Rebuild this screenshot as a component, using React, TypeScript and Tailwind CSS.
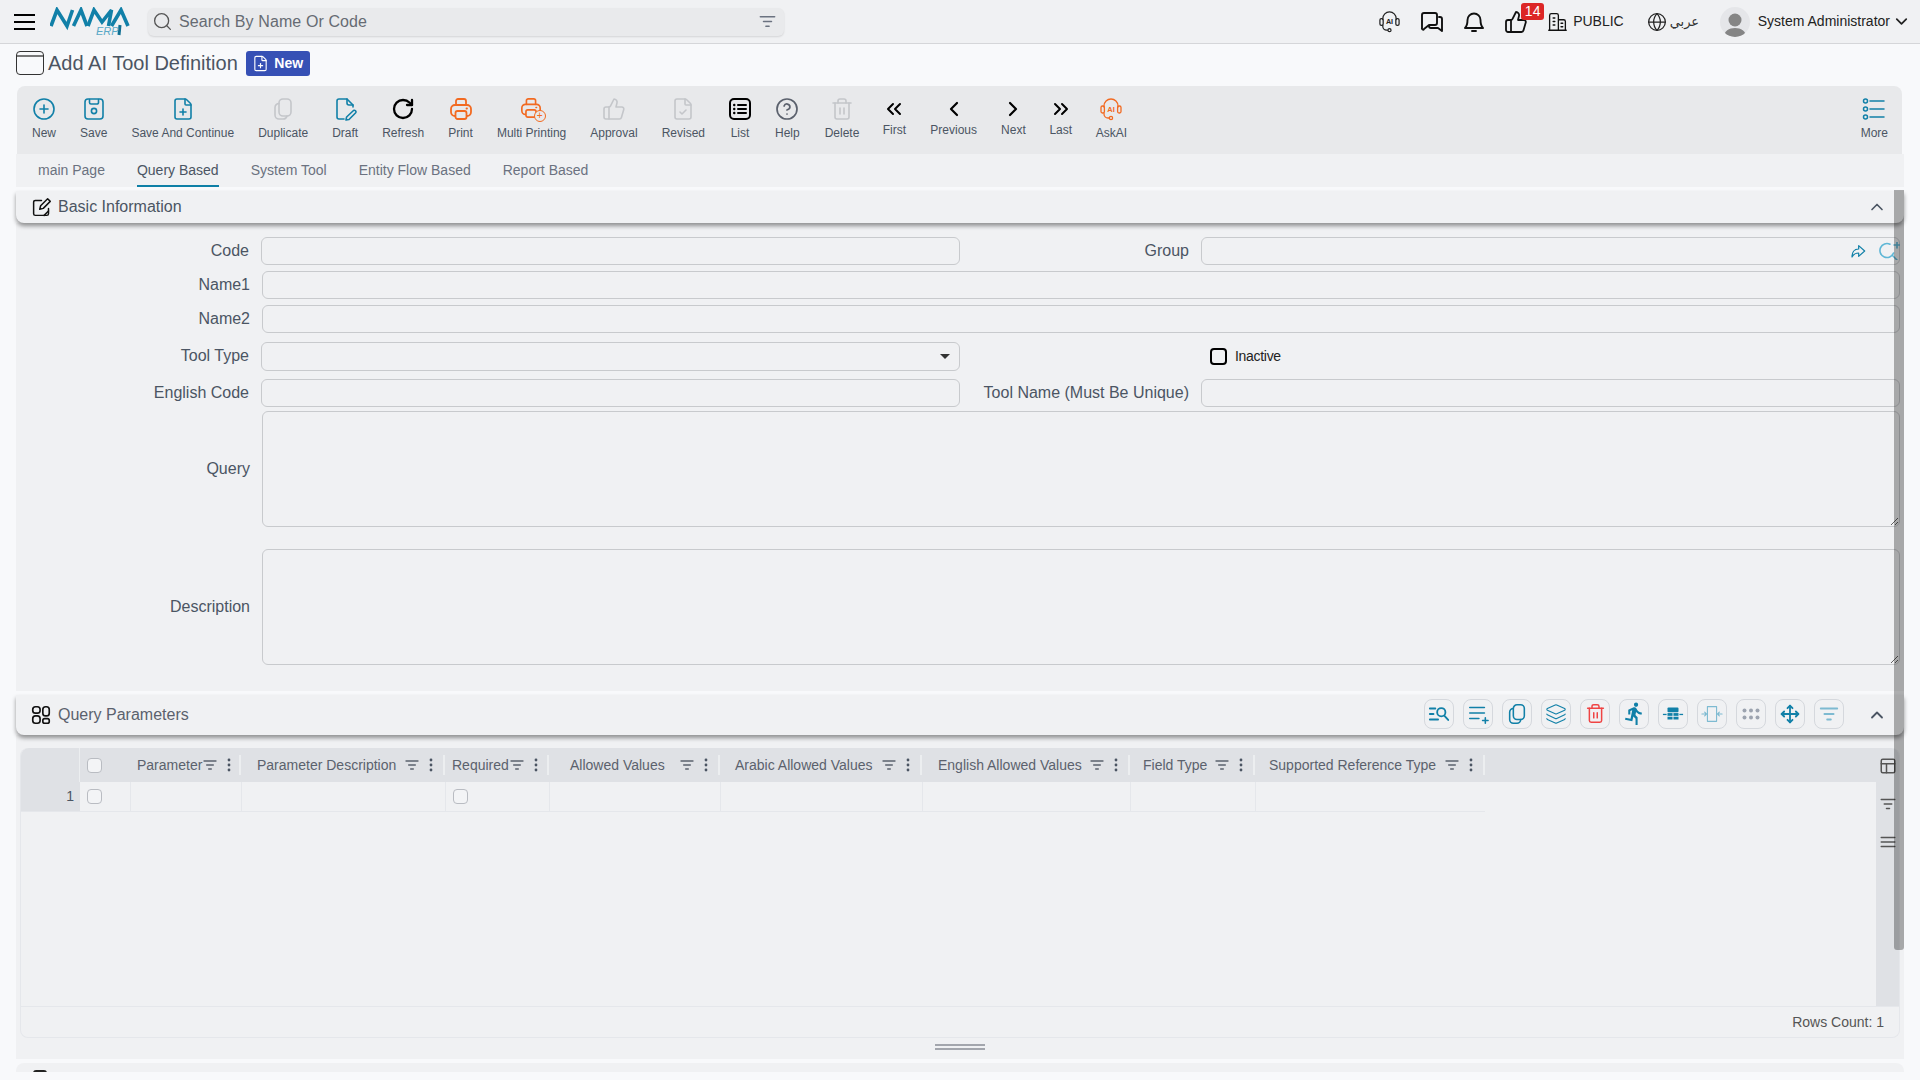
import type { ReactNode } from 'react';
import {
  ChevronDown,
  ChevronLeft,
  ChevronRight,
  ChevronUp,
  ChevronsLeft,
  ChevronsRight,
  CircleHelp,
  CirclePlus,
  FileCheck,
  FilePlus,
  Globe,
  Layers,
  Move,
  RotateCw,
  Search,
  ThumbsUp,
  Trash2,
} from 'lucide-react';
import { MdDirectionsRun } from 'react-icons/md';

const TEAL = '#1180a8';
const ORANGE = '#f26a21';
const MUTED = '#c4c6ca';

function Svg({ size = 24, color = 'currentColor', sw = 1.6, children }: { size?: number; color?: string; sw?: number; children: ReactNode }) {
  return (
    <svg width={size} height={size} viewBox="0 0 24 24" fill="none" stroke={color} strokeWidth={sw} strokeLinecap="round" strokeLinejoin="round">
      {children}
    </svg>
  );
}

function PrinterIcon({ size = 24 }: { size?: number }) {
  return (
    <Svg size={size} color={ORANGE} sw={1.8}>
      <path d="M7 8V4a2 2 0 0 1 2-2h6a2 2 0 0 1 2 2v4" />
      <rect x="2" y="8" width="20" height="11" rx="4" />
      <rect x="6.5" y="14" width="11" height="8" rx="2" fill="#e8e9eb" />
      <path d="M17.5 11.5h.5" />
    </Svg>
  );
}

function FilterLines({ size = 20, color = '#5b616d', sw = 2 }: { size?: number; color?: string; sw?: number }) {
  return (
    <Svg size={size} color={color} sw={sw}>
      <path d="M3 6h18M7 12h10M10 18h4" />
    </Svg>
  );
}

function Dots() {
  return (
    <svg width="4" height="14" viewBox="0 0 4 14" fill="#4b5563">
      <circle cx="2" cy="2" r="1.4" />
      <circle cx="2" cy="7" r="1.4" />
      <circle cx="2" cy="12" r="1.4" />
    </svg>
  );
}

function AiHeadset({ color, size = 24 }: { color: string; size?: number }) {
  return (
    <svg width={size} height={size} viewBox="0 0 24 24" fill="none" stroke={color} strokeWidth="1.3" strokeLinecap="round">
      <path d="M5 10V9a7 7 0 0 1 14 0v1" />
      <rect x="2" y="9" width="3.4" height="7" rx="1.5" />
      <rect x="18.6" y="9" width="3.4" height="7" rx="1.5" />
      <path d="M5 16v1a4 4 0 0 0 4 4h1" />
      <circle cx="12" cy="21" r="1.6" />
      <text x="12" y="15" textAnchor="middle" fontSize="7.5" fontWeight="700" fill={color} stroke="none" fontFamily="Liberation Sans">
        AI
      </text>
    </svg>
  );
}

function Logo() {
  return (
    <div className="relative w-[80px] h-[30px] ml-[15px]">
      <svg width="80" height="30" viewBox="0 0 80 30" fill="none" stroke="#1180a8" strokeWidth="3.6" strokeLinejoin="miter">
        <path d="M1 19 L7 3 L17 19 L22.5 3" />
        <path d="M23.5 19 L31 3 L37 19" />
        <path d="M38 19 L44 3 L52 15 L61.5 3 L58.5 19" />
        <path d="M61.5 19 L71 3 L78 19" />
        <path d="M70 18 L69 28" stroke="#0f6f92" strokeWidth="3" />
      </svg>
      <span className="absolute left-[46px] top-[18px] text-[11px] leading-[12px] italic text-[#5aa9c7]">ERP</span>
    </div>
  );
}

type ToolItem = { label: string; icon: ReactNode; nav?: boolean; nudge?: string };

const toolItems: ToolItem[] = [
  { label: 'New', icon: <CirclePlus size={24} color={TEAL} strokeWidth={1.6} /> },
  {
    label: 'Save',
    icon: (
      <Svg color={TEAL}>
        <path d="M6 2h12a3 3 0 0 1 3 3v14a3 3 0 0 1-3 3H6a3 3 0 0 1-3-3V5a3 3 0 0 1 3-3z" />
        <path d="M7.5 2.5v3a1.5 1.5 0 0 0 1.5 1.5h6a1.5 1.5 0 0 0 1.5-1.5v-3" />
        <circle cx="12" cy="14" r="2.6" />
      </Svg>
    ),
  },
  { label: 'Save And Continue', icon: <FilePlus size={24} color={TEAL} strokeWidth={1.6} /> },
  {
    label: 'Duplicate',
    icon: (
      <Svg color={MUTED}>
        <rect x="8" y="2" width="12" height="17" rx="4" />
        <path d="M8 6.5A4 4 0 0 0 4 10.5V18a4 4 0 0 0 4 4h4a4 4 0 0 0 4-3" />
      </Svg>
    ),
  },
  {
    label: 'Draft',
    icon: (
      <Svg color={TEAL}>
        <path d="M11 22H6a2 2 0 0 1-2-2V4a2 2 0 0 1 2-2h8l6 6v2" />
        <path d="M14 2v4a2 2 0 0 0 2 2h4" />
        <path d="M20.5 13.5a1.6 1.6 0 0 1 2.2 2.2L16 22.5l-3 .5.6-3z" />
      </Svg>
    ),
  },
  { label: 'Refresh', icon: <RotateCw size={24} color="#000" strokeWidth={2.3} /> },
  { label: 'Print', icon: <PrinterIcon /> },
  {
    label: 'Multi Printing',
    icon: (
      <div className="relative w-6 h-6">
        <PrinterIcon size={22} />
        <div className="absolute right-[-2px] bottom-[-1px] w-[12px] h-[12px] rounded-full bg-[#e8e9eb] border-[1.5px] border-[#f26a21] flex items-center justify-center text-[10px] leading-none text-[#f26a21]">+</div>
      </div>
    ),
  },
  { label: 'Approval', icon: <ThumbsUp size={24} color={MUTED} strokeWidth={1.6} /> },
  { label: 'Revised', icon: <FileCheck size={24} color={MUTED} strokeWidth={1.6} /> },
  {
    label: 'List',
    nudge: 'ml-[-1px]',
    icon: (
      <Svg color="#000" sw={2}>
        <rect x="2" y="2" width="20" height="20" rx="4" />
        <path d="M10 8h8M10 12h8M10 16h8" />
        <path d="M6.2 8h.1M6.2 12h.1M6.2 16h.1" strokeWidth="2.4" />
      </Svg>
    ),
  },
  { label: 'Help', nudge: 'ml-[-1px]', icon: <CircleHelp size={24} color="#5b616d" strokeWidth={1.7} /> },
  { label: 'Delete', nudge: 'ml-[1px]', icon: <Trash2 size={24} color={MUTED} strokeWidth={1.6} /> },
  { label: 'First', nav: true, nudge: 'ml-[-1px]', icon: <ChevronsLeft size={24} color="#000" strokeWidth={2} /> },
  { label: 'Previous', nav: true, icon: <ChevronLeft size={24} color="#000" strokeWidth={2.2} /> },
  { label: 'Next', nav: true, icon: <ChevronRight size={24} color="#000" strokeWidth={2.2} /> },
  { label: 'Last', nav: true, nudge: 'ml-[-1px]', icon: <ChevronsRight size={24} color="#000" strokeWidth={2} /> },
  { label: 'AskAI', nudge: 'ml-[-1px]', icon: <AiHeadset color={ORANGE} /> },
];

function ToolButton({ item }: { item: ToolItem }) {
  return (
    <div className={`flex flex-col items-center px-3 pt-[11px] ${item.nudge ?? ''}`}>
      <div className="h-6 flex items-center justify-center">{item.icon}</div>
      <span className={`${item.nav ? 'mt-[2px]' : 'mt-[5px]'} text-[12px] leading-[14px] text-[#4b5563] whitespace-nowrap`}>{item.label}</span>
    </div>
  );
}

const tabs = ['main Page', 'Query Based', 'System Tool', 'Entity Flow Based', 'Report Based'];

const inputClass = 'h-7 rounded-md border border-[#c8cacd] bg-[#f0f1f3] outline-none';

function Label({ children, width = 'w-[234px]' }: { children: ReactNode; width?: string }) {
  return <label className={`${width} shrink-0 text-right text-[16px] leading-5 text-[#4b5563] whitespace-nowrap`}>{children}</label>;
}

const gridButtons: ReactNode[] = [
  <Svg size={22} color={TEAL} sw={2}>
    <path d="M2 6h6M2 12h4M2 18h9" />
    <circle cx="14.5" cy="10" r="4.5" />
    <path d="M18 14l4 4.5" />
  </Svg>,
  <Svg size={22} color={TEAL} sw={1.7}>
    <path d="M3 5h16M3 11h16M3 17h10M17 19h6M20 16v6" />
  </Svg>,
  <Svg size={22} color={TEAL} sw={1.7}>
    <rect x="8" y="2" width="12" height="16" rx="4" />
    <path d="M8 6a4 4 0 0 0-4 4v8a4 4 0 0 0 4 4h4a4 4 0 0 0 4-4" />
  </Svg>,
  <Layers size={22} color={TEAL} strokeWidth={1.2} />,
  <Trash2 size={21} color="#ef4444" strokeWidth={1.7} />,
  <MdDirectionsRun size={25} color={TEAL} />,
  <svg width="22" height="22" viewBox="0 0 24 24" fill={TEAL}>
    <rect x="6" y="5" width="12" height="5" rx="1" />
    <rect x="6" y="11" width="5.5" height="3" />
    <rect x="12.5" y="11" width="5.5" height="3" />
    <rect x="6" y="15" width="5.5" height="3" />
    <rect x="12.5" y="15" width="5.5" height="3" />
    <rect x="1" y="11.8" width="4" height="1.4" />
    <rect x="19" y="11.8" width="4" height="1.4" />
  </svg>,
  <Svg size={22} color="#7dbad1" sw={1.2}>
    <rect x="7" y="4" width="10" height="16" />
    <path d="M1 12h5M18 12h5M4 10l2 2-2 2M20 10l-2 2 2 2" />
  </Svg>,
  <svg width="20" height="20" viewBox="0 0 20 20" fill="#9ca3af">
    <circle cx="3.5" cy="6.5" r="2" />
    <circle cx="10" cy="6.5" r="2" />
    <circle cx="16.5" cy="6.5" r="2" />
    <circle cx="3.5" cy="13.5" r="2" />
    <circle cx="10" cy="13.5" r="2" />
    <circle cx="16.5" cy="13.5" r="2" />
  </svg>,
  <Move size={20} color={TEAL} strokeWidth={2.2} />,
  <FilterLines size={22} color="#7dbad1" />,
];

const columns = [
  { label: 'Parameter', width: 111, pad: 7 },
  { label: 'Parameter Description', width: 204, pad: 16 },
  { label: 'Required', width: 104, pad: 7, check: true },
  { label: 'Allowed Values', width: 171, pad: 21 },
  { label: 'Arabic Allowed Values', width: 202, pad: 15 },
  { label: 'English Allowed Values', width: 208, pad: 16 },
  { label: 'Field Type', width: 125, pad: 13 },
  { label: 'Supported Reference Type', width: 230, pad: 14 },
];

const gridCheckbox = 'block w-[15px] h-[15px] appearance-none rounded-[4px] border border-[#b9bcc2] bg-[#f3f4f6]';

export default function App() {
  return (
    <div className="relative h-screen overflow-hidden bg-[#f8f9fb] font-['Liberation_Sans',Arial,sans-serif]">
      {/* Top bar */}
      <header className="flex items-center h-[44px] bg-[#f0f1f3] border-b border-[#d5d6d9]">
        <div className="ml-[14px] w-[21px] flex flex-col gap-[5px]">
          <span className="h-[2px] bg-black" />
          <span className="h-[2px] bg-black" />
          <span className="h-[2px] bg-black" />
        </div>
        <Logo />
        <div className="ml-[18px] w-[636px] h-[28px] flex items-center rounded-md bg-[#e9eaec] shadow-[0_1px_2px_rgba(0,0,0,0.12)]">
          <Search size={21} color="#555" strokeWidth={1.5} className="ml-[4px]" />
          <span className="ml-[6px] text-[16px] tracking-[0.1px] text-[#666b73]">Search By Name Or Code</span>
          <span className="ml-auto mr-[7px]">
            <FilterLines size={19} color="#6b7280" />
          </span>
        </div>
        <div className="ml-auto flex items-center text-[#111]">
          <AiHeadset color="#222" size={23} />
          <span className="ml-[19px]">
            <Svg size={24} color="#111" sw={1.9}>
              <path d="M4 3h11a2 2 0 0 1 2 2v8a2 2 0 0 1-2 2H9l-5 4a1 1 0 0 1-2-1V5a2 2 0 0 1 2-2z" />
              <path d="M19 7h1a2 2 0 0 1 2 2v12l-4-3h-7a2 2 0 0 1-2-2" />
            </Svg>
          </span>
          <span className="ml-[18px]">
            <Svg size={24} color="#111" sw={1.9}>
              <path d="M3 18c2-2 2.5-4 2.5-8a6.5 6.5 0 0 1 13 0c0 4 .5 6 2.5 8z" />
              <path d="M10 21h4" />
            </Svg>
          </span>
          <span className="relative ml-[18px]">
            <ThumbsUp size={24} color="#111" strokeWidth={1.8} />
            <span className="absolute left-[17px] top-[-7px] w-[23px] h-[17px] rounded-[3px] bg-[#dc2626] text-white text-[14px] leading-[17px] text-center">14</span>
          </span>
          <span className="ml-[19px]">
            <Svg size={21} color="#111" sw={1.5}>
              <path d="M3 22V5a2 2 0 0 1 2-2h6a2 2 0 0 1 2 2v17M13 10h6a2 2 0 0 1 2 2v10M2 22h20M7 8h2M7 12h2M7 16h2M16 14h2M16 18h2" />
            </Svg>
          </span>
          <span className="ml-[5px] text-[14px] text-[#222]">PUBLIC</span>
          <Globe size={20} color="#222" strokeWidth={1.5} className="ml-[23px]" />
          <span className="ml-[3px] w-[28px] text-[13px] text-[#333] font-['DejaVu_Sans',sans-serif]">عربي</span>
          <span className="ml-[22px] w-[30px] h-[30px] rounded-full bg-[#e5e6e9] flex items-end justify-center overflow-hidden">
            <svg width="24" height="26" viewBox="0 0 24 26" fill="#858585">
              <circle cx="12" cy="9" r="6.5" />
              <path d="M1 26c0-6 5-9 11-9s11 3 11 9z" />
            </svg>
          </span>
          <span className="ml-[8px] text-[14px] text-[#222] whitespace-nowrap">System Administrator</span>
          <ChevronDown size={19} color="#222" strokeWidth={2.2} className="ml-[2px] mr-[9px]" />
        </div>
      </header>

      {/* Title */}
      <div className="flex items-center h-[42px] pl-4 pb-[4px]">
        <div className="w-[28px] h-[24px] rounded-[4px] border border-[#333] pt-[3px]">
          <div className="h-[2px] bg-[#777]" />
        </div>
        <h1 className="ml-[4px] text-[20px] font-normal text-[#4b5563]">Add AI Tool Definition</h1>
        <span className="ml-[8px] h-[25px] w-[64px] rounded-[3px] bg-[#3650b5] flex items-center justify-center gap-[5px] text-white text-[14px] font-bold">
          <FilePlus size={17} color="#fff" strokeWidth={1.6} />
          New
        </span>
      </div>

      <main className="ml-4 w-[1888px]">
        {/* Toolbar */}
        <div className="ml-px mr-[2px] h-[68px] flex pl-[3px] pr-[2px] rounded-t-lg bg-[#e8e9eb]">
          {toolItems.map((item) => (
            <ToolButton key={item.label} item={item} />
          ))}
          <div className="ml-auto">
            <ToolButton
              item={{
                label: 'More',
                icon: (
                  <Svg color={TEAL} sw={1.5}>
                    <circle cx="3.5" cy="4" r="2" />
                    <circle cx="3.5" cy="12" r="2" />
                    <circle cx="3.5" cy="20" r="2" />
                    <path d="M8 4h14M8 12h14M8 20h14" />
                  </Svg>
                ),
              }}
            />
          </div>
        </div>

        {/* Tabs */}
        <div className="h-[33px] flex gap-8 pl-[22px] bg-[#f0f1f3]">
          {tabs.map((tab) => (
            <div
              key={tab}
              className={`h-[33px] pt-[8px] text-[14px] leading-4 border-b-2 ${tab === 'Query Based' ? 'border-[#0e7fa6] text-[#4b5563]' : 'border-transparent text-[#6b7280]'}`}
            >
              {tab}
            </div>
          ))}
        </div>

        {/* Basic Information */}
        <div className="relative z-10 mt-1 h-[32px] flex items-center justify-between pl-[15px] pr-[17px] rounded-b-lg bg-[#f0f1f3] shadow-[0_3px_4px_rgba(0,0,0,0.4)]">
          <div className="flex items-center">
            <Svg size={21} color="#111" sw={1.7}>
              <path d="M20 13v6a2 2 0 0 1-2 2H5a2 2 0 0 1-2-2V6a2 2 0 0 1 2-2h7" />
              <path d="M10 14l1-4 8-8 3 3-8 8z" />
              <path d="M15 21l5-5" />
            </Svg>
            <span className="ml-[6px] text-[16px] text-[#4b5563]">Basic Information</span>
          </div>
          <ChevronUp size={20} color="#4b5563" strokeWidth={2} />
        </div>

        <div className="h-[468px] pt-[14px] bg-[#f0f1f3]">
          <div className="flex items-center">
            <Label width="w-[233px]">Code</Label>
            <input className={`${inputClass} ml-3 w-[699px]`} />
            <Label width="w-[229px]">Group</Label>
            <div className="relative ml-3 w-[699px]">
              <input className={`${inputClass} block w-full`} />
              <svg className="absolute right-[34px] top-[6px]" width="16" height="16" viewBox="0 0 24 24" fill="none" stroke={TEAL} strokeWidth="1.8" strokeLinejoin="round">
                <path d="M13 4l9 8-9 8v-5C8 15 5 17 3 21c0-7 3-12 10-12z" />
              </svg>
              <svg className="absolute right-0 top-[5px]" width="22" height="18" viewBox="0 0 22 18" fill="none" stroke="#5fb7d6" strokeWidth="1.6" strokeLinecap="round">
                <path d="M12 2.2A7 7 0 1 0 15.5 11M14 13l5 5M19 0v6M16 3h6" />
              </svg>
            </div>
          </div>
          <div className="mt-[6px] flex items-center">
            <Label>Name1</Label>
            <input className={`${inputClass} ml-3 w-[1638px]`} />
          </div>
          <div className="mt-[6px] flex items-center">
            <Label>Name2</Label>
            <input className={`${inputClass} ml-3 w-[1638px]`} />
          </div>
          <div className="mt-[9px] flex items-center h-[29px]">
            <Label width="w-[233px] pb-[2px]">Tool Type</Label>
            <div className="relative ml-3 w-[699px]">
              <select className={`${inputClass} block w-full !h-[29px] appearance-none`} />
              <span className="absolute right-[10px] top-[12px] border-x-[5px] border-t-[5px] border-x-transparent border-t-[#333]" />
            </div>
            <input type="checkbox" className="ml-[250px] w-[17px] h-[17px] appearance-none rounded-[4px] border-2 border-black" />
            <span className="ml-2 text-[14px] tracking-[-0.3px] text-[#222]">Inactive</span>
          </div>
          <div className="mt-[8px] flex items-center">
            <Label width="w-[233px]">English Code</Label>
            <input className={`${inputClass} ml-3 w-[699px]`} />
            <Label width="w-[229px]">Tool Name (Must Be Unique)</Label>
            <input className={`${inputClass} ml-3 w-[699px]`} />
          </div>
          <div className="mt-[4px] flex items-center">
            <Label>Query</Label>
            <textarea className="ml-3 w-[1638px] h-[116px] rounded-md border border-[#c8cacd] bg-[#f0f1f3] outline-none resize-y block" />
          </div>
          <div className="mt-[22px] flex items-center">
            <Label>Description</Label>
            <textarea className="ml-3 w-[1638px] h-[116px] rounded-md border border-[#c8cacd] bg-[#f0f1f3] outline-none resize-y block" />
          </div>
        </div>

        {/* Query Parameters */}
        <div className="relative z-10 mt-1 h-[40px] flex items-center pl-[14px] pr-[17px] rounded-b-lg bg-[#f0f1f3] shadow-[0_3px_4px_rgba(0,0,0,0.4)]">
          <Svg size={22} color="#111" sw={1.8}>
            <rect x="3" y="3" width="8" height="7" rx="3" />
            <rect x="14" y="3" width="7" height="10" rx="3" />
            <rect x="3" y="13" width="8" height="8" rx="3" />
            <rect x="14" y="16" width="7" height="5" rx="2" />
          </Svg>
          <span className="ml-[6px] text-[16px] text-[#5b616d]">Query Parameters</span>
          <div className="ml-auto mt-[-3px] flex gap-[9px]">
            {gridButtons.map((icon, i) => (
              <div key={i} className="w-[30px] h-[30px] rounded-lg border border-[#d5d8dd] flex items-center justify-center">
                {icon}
              </div>
            ))}
          </div>
          <ChevronUp size={20} color="#4b5563" strokeWidth={2.2} className="ml-[23px]" />
        </div>

        <div className="h-[324px] pt-[13px] bg-[#f0f1f3]">
          <div className="ml-1 mr-1 h-[290px] flex flex-col rounded-lg border-b border-x border-[#e5e7eb]">
            <div className="flex-1 flex">
              <div className="flex-1">
                <div className="flex h-[34px] rounded-tl-lg bg-[#dfe1e5]">
                  <div className="w-[59px] shrink-0 border-r border-[#eceef0]" />
                  <div className="w-[50px] shrink-0 flex items-center pl-[7px]">
                    <input type="checkbox" className={gridCheckbox} />
                  </div>
                  {columns.map((col) => (
                    <div key={col.label} className="relative shrink-0 flex items-center pr-[12px]" style={{ width: col.width, paddingLeft: col.pad }}>
                      <span className="text-[14px] text-[#5b616d] whitespace-nowrap">{col.label}</span>
                      <span className="ml-auto">
                        <FilterLines size={16} />
                      </span>
                      <span className="ml-[9px]">
                        <Dots />
                      </span>
                      <span className="absolute right-0 top-[7px] h-[20px] w-[2px] bg-[#eceef0]" />
                    </div>
                  ))}
                </div>
                <div className="flex h-[30px] border-b border-[#e5e7eb] w-[1464px]">
                  <div className="w-[59px] shrink-0 bg-[#dfe1e5] flex items-center justify-end pr-[6px] text-[14px] text-[#4b5563]">1</div>
                  <div className="w-[50px] shrink-0 flex items-center pl-[7px]">
                    <input type="checkbox" className={gridCheckbox} />
                  </div>
                  {columns.map((col) => (
                    <div key={col.label} className="shrink-0 flex items-center pl-[7px] border-l border-[#e5e7eb]" style={{ width: col.width }}>
                      {col.check && <input type="checkbox" className={gridCheckbox} />}
                    </div>
                  ))}
                </div>
              </div>
              <div className="w-[23px] shrink-0 rounded-tr-lg bg-[#dfe1e5] flex flex-col items-center pt-[9px]">
                <Svg size={18} color="#555" sw={2}>
                  <rect x="3" y="3" width="18" height="18" rx="2" />
                  <path d="M3 9h18M10 9v12" />
                </Svg>
                <span className="mt-[20px]">
                  <FilterLines size={18} color="#555" />
                </span>
                <span className="mt-[20px]">
                  <Svg size={18} color="#555" sw={2}>
                    <path d="M3 6h18M3 12h18M3 18h18" />
                  </Svg>
                </span>
              </div>
            </div>
            <div className="h-[31px] shrink-0 border-t border-[#e5e7eb] flex items-center justify-end pr-[15px] text-[14px] text-[#555]">Rows Count: 1</div>
          </div>
          <div className="mt-[6px] w-[50px] mx-auto">
            <div className="h-[2px] bg-[#a3a6ad]" />
            <div className="mt-[2px] h-[2px] bg-[#a3a6ad]" />
          </div>
        </div>

        {/* Next panel, cut off by the page */}
        <div className="mt-1 h-[9px] overflow-hidden rounded-t-lg bg-[#f0f1f3] pl-[17px] pt-[7px]">
          <div className="w-[14px] h-[6px] rounded-sm bg-[#222]" />
        </div>
      </main>

      {/* Overlay scrollbar */}
      <div className="absolute left-[1894px] top-[190px] w-[10px] h-[760px] rounded-b-[3px] bg-black/30 z-20" />
    </div>
  );
}
